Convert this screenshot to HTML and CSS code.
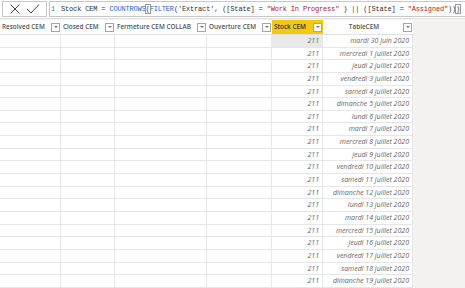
FILE: index.html
```html
<!DOCTYPE html>
<html lang="en">
<head>
    <meta charset="UTF-8">
    <title>Stock CEM</title>
    <link rel="stylesheet" href="styles.css">
</head>
<body>
    <!-- Formula bar -->
    <div class="formula-bar">
        <div class="formula-actions">
            <svg width="12" height="12" viewBox="0 0 12 12"><path d="M1.5 1.5 L10.5 10.5 M10.5 1.5 L1.5 10.5" stroke="#444" stroke-width="1" fill="none"/></svg>
            <svg width="14" height="12" viewBox="0 0 14 12"><path d="M1 6 L5 10 L13 1.5" stroke="#444" stroke-width="1" fill="none"/></svg>
        </div>
        <div class="formula-text"><span class="ln">1</span><span>Stock CEM = <span class="fn">COUNTROWS</span><span class="match">(</span><span class="fn">FILTER</span>('Extract', ([State] = <span class="str">"Work In Progress"</span> ) || ([State] = <span class="str">"Assigned"</span>))<span class="match">)</span></span></div>
    </div>

    <div class="view">
        <div class="grid">
            <div class="head"><span>Resolved CEM</span><i class="dd"></i></div>
            <div class="head"><span>Closed CEM</span><i class="dd"></i></div>
            <div class="head"><span>Fermeture CEM COLLAB</span><i class="dd"></i></div>
            <div class="head"><span>Ouverture CEM</span><i class="dd"></i></div>
            <div class="head active"><span>Stock CEM</span><i class="dd"></i></div>
            <div class="head center"><span>TableCEM</span><i class="dd"></i></div>

            <div></div><div></div><div></div><div></div><div class="num sel">211</div><div class="date">mardi 30 juin 2020</div>
            <div></div><div></div><div></div><div></div><div class="num">211</div><div class="date">mercredi 1 juillet 2020</div>
            <div></div><div></div><div></div><div></div><div class="num">211</div><div class="date">jeudi 2 juillet 2020</div>
            <div></div><div></div><div></div><div></div><div class="num">211</div><div class="date">vendredi 3 juillet 2020</div>
            <div></div><div></div><div></div><div></div><div class="num">211</div><div class="date">samedi 4 juillet 2020</div>
            <div></div><div></div><div></div><div></div><div class="num">211</div><div class="date">dimanche 5 juillet 2020</div>
            <div></div><div></div><div></div><div></div><div class="num">211</div><div class="date">lundi 6 juillet 2020</div>
            <div></div><div></div><div></div><div></div><div class="num">211</div><div class="date">mardi 7 juillet 2020</div>
            <div></div><div></div><div></div><div></div><div class="num">211</div><div class="date">mercredi 8 juillet 2020</div>
            <div></div><div></div><div></div><div></div><div class="num">211</div><div class="date">jeudi 9 juillet 2020</div>
            <div></div><div></div><div></div><div></div><div class="num">211</div><div class="date">vendredi 10 juillet 2020</div>
            <div></div><div></div><div></div><div></div><div class="num">211</div><div class="date">samedi 11 juillet 2020</div>
            <div></div><div></div><div></div><div></div><div class="num">211</div><div class="date">dimanche 12 juillet 2020</div>
            <div></div><div></div><div></div><div></div><div class="num">211</div><div class="date">lundi 13 juillet 2020</div>
            <div></div><div></div><div></div><div></div><div class="num">211</div><div class="date">mardi 14 juillet 2020</div>
            <div></div><div></div><div></div><div></div><div class="num">211</div><div class="date">mercredi 15 juillet 2020</div>
            <div></div><div></div><div></div><div></div><div class="num">211</div><div class="date">jeudi 16 juillet 2020</div>
            <div></div><div></div><div></div><div></div><div class="num">211</div><div class="date">vendredi 17 juillet 2020</div>
            <div></div><div></div><div></div><div></div><div class="num">211</div><div class="date">samedi 18 juillet 2020</div>
            <div></div><div></div><div></div><div></div><div class="num">211</div><div class="date">dimanche 19 juillet 2020</div>
            <div></div><div></div><div></div><div></div><div></div><div></div>
        </div>
        <div class="blank"></div>
    </div>
</body>
</html>
```

FILE: styles.css
```css
body {
    margin: 0;
    font-family: "Open Sans", "Noto Sans", sans-serif;
    background: #fff;
    width: 465px;
    height: 288px;
    overflow: hidden;
}

.formula-bar {
    display: flex;
    height: 19px;
    padding: 1px 0 0 2px;
    box-sizing: border-box;
    gap: 2px;
    border-bottom: 1px solid #e1e1e1;
}

.formula-actions {
    width: 45px;
    height: 16px;
    box-sizing: border-box;
    border: 1px solid #c8c8c8;
    display: flex;
    align-items: center;
    justify-content: center;
    gap: 5px;
}

.formula-text {
    flex: 1;
    min-width: 0;
    height: 16px;
    box-sizing: border-box;
    border: 1px solid #c8c8c8;
    border-right: none;
    font-family: "Liberation Mono", "DejaVu Sans Mono", monospace;
    font-size: 7px;
    letter-spacing: -0.17px;
    line-height: 14px;
    color: #333;
    white-space: pre;
    overflow: hidden;
    padding-left: 1px;
}

.ln { color: #2b91af; margin-right: 6px; }
.fn { color: #1d5fd6; }
.str { color: #b32020; }
.match { outline: 1px solid #999; }

.view {
    display: flex;
    background: #f3f2f1;
}

.grid {
    display: grid;
    grid-template-columns: 61px 54px 92px 65px 51px 90px;
    grid-template-rows: 15px;
    grid-auto-rows: 12.65px;
    background: #fff;
    border-top: 1px solid #f3f2f1;
}

.grid > div {
    border-right: 1px solid #e6e6e6;
    border-bottom: 1px solid #e6e6e6;
    box-sizing: border-box;
    font-size: 7px;
    color: #666;
    padding: 0 3px;
    line-height: 11.5px;
    overflow: hidden;
    white-space: nowrap;
}

.grid > .head {
    display: flex;
    align-items: center;
    justify-content: space-between;
    font-weight: 600;
    font-size: 6.4px;
    color: #555;
    border-right: none;
    border-bottom: 1px solid #e1e1e1;
    padding: 0 1px 0 2px;
}

.head.active { background: #f2c811; color: #333; }

.head.center span { flex: 1; text-align: center; }

.dd {
    width: 9px;
    height: 9px;
    flex: none;
    box-sizing: border-box;
    border: 1px solid #a6a6a6;
    background: #fff;
    display: flex;
    align-items: center;
    justify-content: center;
}

.dd::after {
    content: "";
    border-left: 2px solid transparent;
    border-right: 2px solid transparent;
    border-top: 2px solid #777;
}

.num, .date {
    text-align: right;
    font-style: italic;
}

.sel { background: #e9e9e9; }

.blank { flex: 1; }
```
